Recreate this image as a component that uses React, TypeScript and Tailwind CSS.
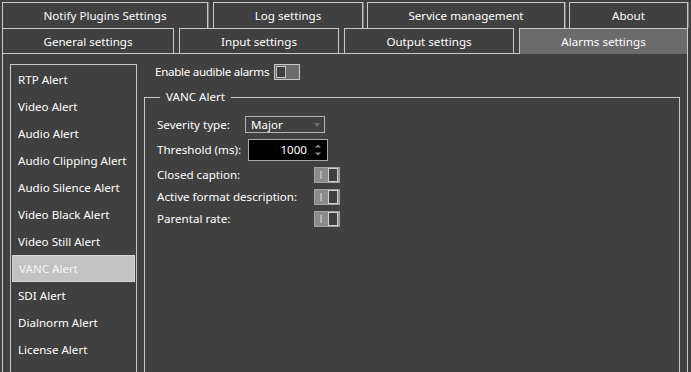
import React from "react";

const B = "border-[#c8c8c8]";

function Tab1({ w, ml, label }: { w: string; ml: string; label: string }) {
  return (
    <div
      className={`${w} ${ml} h-[26px] border-t border-l border-r ${B} bg-[#404040] flex items-center justify-center pt-[1px] shadow-[1px_0_0_#7a7a7a]`}
    >
      {label}
    </div>
  );
}

function Tab2({ w, ml, label, active }: { w: string; ml: string; label: string; active?: boolean }) {
  return (
    <div
      className={`${w} ${ml} ${active ? "h-[26px] bg-[#6b6b6b] relative z-10" : "h-[25px] bg-[#404040]"} border-t border-l border-r ${B} flex items-start justify-center pt-[5px]`}
    >
      {label}
    </div>
  );
}

function OnToggle() {
  return (
    <div className="w-[26px] h-[16px] border border-[#c8c8c8] bg-[#6b6b6b] p-px flex shrink-0">
      <div className="w-[10px] h-[12px] border border-[#c8c8c8] bg-[#404040]" />
    </div>
  );
}

function DisabledToggle() {
  return (
    <div className="w-[26px] h-[16px] border border-[#a4a4a4] bg-[#8b8b8b] p-px flex items-center justify-between shrink-0">
      <div className="ml-[4px] w-[2px] h-[8px] bg-[#b5b5b5]" />
      <div className="w-[10px] h-[14px] border border-[#d0d0d0] bg-[#3e3e3e]" />
    </div>
  );
}

const alerts = [
  "RTP Alert",
  "Video Alert",
  "Audio Alert",
  "Audio Clipping Alert",
  "Audio Silence Alert",
  "Video Black Alert",
  "Video Still Alert",
  "VANC Alert",
  "SDI Alert",
  "Dialnorm Alert",
  "License Alert",
];

export default function App() {
  return (
    <div
      className="w-[691px] h-[372px] overflow-hidden bg-[#404040] text-white text-[11.6px] leading-[16px]"
      style={{ fontFamily: '"Noto Sans", "Open Sans", sans-serif' }}
    >
      <div className="pt-[2px] flex">
        <Tab1 w="w-[206px]" ml="ml-[2px]" label="Notify Plugins Settings" />
        <Tab1 w="w-[150px]" ml="ml-[5px]" label="Log settings" />
        <Tab1 w="w-[198px]" ml="ml-[4px]" label="Service management" />
        <Tab1 w="w-[119px]" ml="ml-[4px]" label="About" />
      </div>
      <div className="flex h-[25px] items-start">
        <Tab2 w="w-[172px]" ml="ml-[2px]" label="General settings" />
        <Tab2 w="w-[160px]" ml="ml-[5px]" label="Input settings" />
        <Tab2 w="w-[170px]" ml="ml-[5px]" label="Output settings" />
        <Tab2 w="w-[169px]" ml="ml-[5px]" label="Alarms settings" active />
      </div>
      <div className={`ml-[2px] w-[686px] h-[330px] border-t border-l border-r ${B} flex items-start pt-[10px] pl-[7px]`}>
        <div className={`w-[127px] h-[320px] border ${B} p-px flex flex-col`}>
          {alerts.map((a) => (
            <div
              key={a}
              className={`h-[27px] shrink-0 flex items-center pt-[1px] pl-[6px] ${
                a === "VANC Alert" ? "bg-[#c2c2c2] border border-[#d6d6d6] pl-[5px] text-[#f4f4f4]" : ""
              }`}
            >
              {a}
            </div>
          ))}
        </div>
        <div className="ml-[7px] w-[536px] flex flex-col">
          <div className="h-[16px] flex items-center pl-[11px]">
            <span className="w-[119px] whitespace-nowrap tracking-[-0.3px]">Enable audible alarms</span>
            <OnToggle />
          </div>
          <fieldset className={`mt-[9px] border ${B} h-[300px] pl-[12px]`}>
            <legend className="ml-[3px] px-[6px] leading-[16px]">VANC Alert</legend>
            <div className="mt-[11px] h-[17px] flex items-center">
              <span className="w-[88px] whitespace-nowrap">Severity type:</span>
              <div className="w-[80px] h-[17px] border border-[#b4b4b4] flex items-center justify-between pl-[5px] pr-[4px]">
                <span>Major</span>
                <svg width="6" height="4" viewBox="0 0 6 4">
                  <path d="M0 0 L6 0 L3 4 Z" fill="#707070" />
                </svg>
              </div>
            </div>
            <div className="mt-[6px] h-[22px] flex items-center">
              <span className="w-[91px] whitespace-nowrap">Threshold (ms):</span>
              <div className="w-[80px] h-[22px] border border-[#a8a8a8] bg-black flex items-center justify-end pr-[6px]">
                <span className="mr-[8px]">1000</span>
                <svg width="6" height="12" viewBox="0 0 6 12">
                  <path d="M0 3.5 L3 0.5 L6 3.5 Z" fill="#8c8c8c" />
                  <path d="M0 8.5 L3 11.5 L6 8.5 Z" fill="#8c8c8c" />
                </svg>
              </div>
            </div>
            <div className="mt-[6px] h-[16px] flex items-center">
              <span className="w-[157px] whitespace-nowrap">Closed caption:</span>
              <DisabledToggle />
            </div>
            <div className="mt-[6px] h-[16px] flex items-center">
              <span className="w-[157px] whitespace-nowrap">Active format description:</span>
              <DisabledToggle />
            </div>
            <div className="mt-[6px] h-[16px] flex items-center">
              <span className="w-[157px] whitespace-nowrap">Parental rate:</span>
              <DisabledToggle />
            </div>
          </fieldset>
        </div>
      </div>
    </div>
  );
}
